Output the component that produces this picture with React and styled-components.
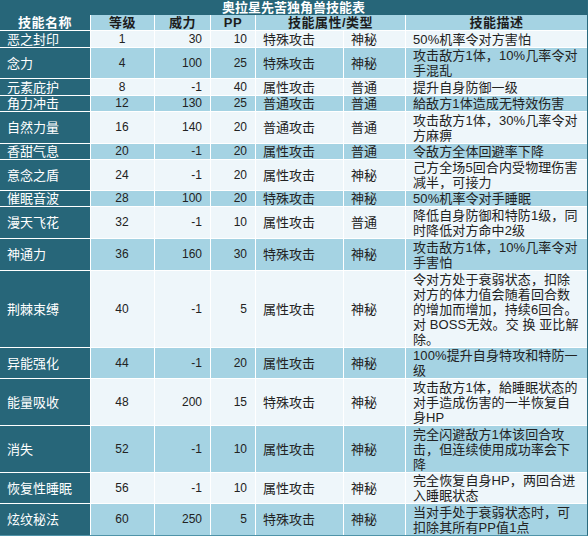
import React from 'react'
import styled, { createGlobalStyle } from 'styled-components'

const GlobalStyle = createGlobalStyle`
  body {
    margin: 0;
    background: #ffffff;
    font-family: "Liberation Sans", "Noto Sans CJK SC", sans-serif;
  }
`;

// 행 높이는 원본 표 기준 (줄 수에 따라 다름)
const skills = [
  { name: '恶之封印', lv: 1, power: 30, pp: 10, kind: '特殊攻击', type: '神秘', h: 16, desc: ['50%机率令对方害怕'] },
  { name: '念力', lv: 4, power: 100, pp: 25, kind: '特殊攻击', type: '神秘', h: 30, desc: ['攻击敌方1体，10%几率令对', '手混乱'] },
  { name: '元素庇护', lv: 8, power: -1, pp: 40, kind: '属性攻击', type: '普通', h: 16, desc: ['提升自身防御一级'] },
  { name: '角力冲击', lv: 12, power: 130, pp: 25, kind: '普通攻击', type: '普通', h: 15, desc: ['給敌方1体造成无特效伤害'] },
  { name: '自然力量', lv: 16, power: 140, pp: 20, kind: '普通攻击', type: '普通', h: 31, desc: ['攻击敌方1体，30%几率令对', '方麻痹'] },
  { name: '香甜气息', lv: 20, power: -1, pp: 20, kind: '属性攻击', type: '普通', h: 15, desc: ['令敌方全体回避率下降'] },
  { name: '意念之盾', lv: 24, power: -1, pp: 20, kind: '属性攻击', type: '神秘', h: 30, desc: ['己方全场5回合内受物理伤害', '减半，可接力'] },
  { name: '催眠音波', lv: 28, power: 100, pp: 20, kind: '特殊攻击', type: '神秘', h: 15, desc: ['50%机率令对手睡眠'] },
  { name: '漫天飞花', lv: 32, power: -1, pp: 10, kind: '属性攻击', type: '普通', h: 31, desc: ['降低自身防御和特防1级，同', '时降低对方命中2级'] },
  { name: '神通力', lv: 36, power: 160, pp: 30, kind: '特殊攻击', type: '神秘', h: 31, desc: ['攻击敌方1体，10%几率令对', '手害怕'] },
  { name: '荆棘束缚', lv: 40, power: -1, pp: 5, kind: '属性攻击', type: '神秘', h: 76, desc: ['令对方处于衰弱状态，扣除', '对方的体力值会随着回合数', '的增加而增加，持续6回合。', '对 BOSS无效。交 换 亚比解', '除。'] },
  { name: '异能强化', lv: 44, power: -1, pp: 20, kind: '属性攻击', type: '神秘', h: 30, desc: ['100%提升自身特攻和特防一', '级'] },
  { name: '能量吸收', lv: 48, power: 200, pp: 15, kind: '特殊攻击', type: '神秘', h: 46, desc: ['攻击敌方1体，給睡眠状态的', '对手造成伤害的一半恢复自', '身HP'] },
  { name: '消失', lv: 52, power: -1, pp: 10, kind: '属性攻击', type: '神秘', h: 46, desc: ['完全闪避敌方1体该回合攻', '击，但连续使用成功率会下', '降'] },
  { name: '恢复性睡眠', lv: 56, power: -1, pp: 10, kind: '属性攻击', type: '神秘', h: 30, desc: ['完全恢复自身HP，两回合进', '入睡眠状态'] },
  { name: '炫纹秘法', lv: 60, power: 250, pp: 5, kind: '特殊攻击', type: '神秘', h: 31, desc: ['当对手处于衰弱状态时，可', '扣除其所有PP值1点'] },
];

const App = () => {
  const rows = ['14px', '15px', ...skills.map((s) => `${s.h}px`)].join(' ');

  return (
    <>
      <GlobalStyle />
      <Table $rows={rows}>
        <Title>奥拉星先苦独角兽技能表</Title>

        <HeadCell $dark>技能名称</HeadCell>
        <HeadCell>等级</HeadCell>
        <HeadCell>威力</HeadCell>
        <HeadCell>PP</HeadCell>
        <HeadCell $span={2}>技能属性/类型</HeadCell>
        <HeadCell>技能描述</HeadCell>

        {skills.map((s, i) => {
          const alt = i % 2 === 1;
          return (
            <React.Fragment key={s.name}>
              <NameCell>{s.name}</NameCell>
              <Cell $alt={alt} $align="center" $num>{s.lv}</Cell>
              <Cell $alt={alt} $align="flex-end" $num>{s.power}</Cell>
              <Cell $alt={alt} $align="flex-end" $num>{s.pp}</Cell>
              <Cell $alt={alt}>{s.kind}</Cell>
              <Cell $alt={alt}>{s.type}</Cell>
              <DescCell $alt={alt}>
                {s.desc.map((line) => (
                  <DescLine key={line}>{line}</DescLine>
                ))}
              </DescCell>
            </React.Fragment>
          );
        })}
      </Table>
    </>
  );
};

export default App;

const Table = styled.div`
  display: grid;
  grid-template-columns: 90px 63px 55px 44px 87px 61px 181px;
  grid-template-rows: ${(p) => p.$rows};
  gap: 1px;
  width: 587px;
  background: #ffffff;
  border-right: 1px solid #2a6a7e;
  border-bottom: 1px solid #4f93a8;
  font-size: 13px;
  line-height: 15px;
  color: #1e1e1e;
`;

const Title = styled.div`
  grid-column: 1 / -1;
  display: flex;
  align-items: center;
  justify-content: center;
  margin-bottom: -1px;
  background: #276679;
  color: #ffffff;
  font-weight: bold;
  font-size: 13px;
  line-height: 14px;
`;

const HeadCell = styled.div`
  grid-column: span ${(p) => p.$span || 1};
  display: flex;
  align-items: center;
  justify-content: center;
  background: ${(p) => (p.$dark ? '#276679' : '#a5d3e3')};
  color: ${(p) => (p.$dark ? '#ffffff' : '#1c1c1c')};
  font-weight: bold;
  letter-spacing: 0.5px;
`;

const NameCell = styled.div`
  display: flex;
  align-items: center;
  padding-left: 7px;
  background: #276679;
  color: #ffffff;
`;

const Cell = styled.div`
  display: flex;
  align-items: center;
  justify-content: ${(p) => p.$align || 'flex-start'};
  padding: 0 8px 0 7px;
  background: ${(p) => (p.$alt ? '#a5d3e3' : '#eef6fa')};
  font-size: ${(p) => (p.$num ? '12px' : '13px')};
  color: #222222;
`;

const DescCell = styled.div`
  display: flex;
  flex-direction: column;
  justify-content: center;
  padding: 0 4px 0 7px;
  background: ${(p) => (p.$alt ? '#a5d3e3' : '#eef6fa')};
  color: #222222;
`;

const DescLine = styled.div`
  white-space: nowrap;
  letter-spacing: 0.1px;
`;
